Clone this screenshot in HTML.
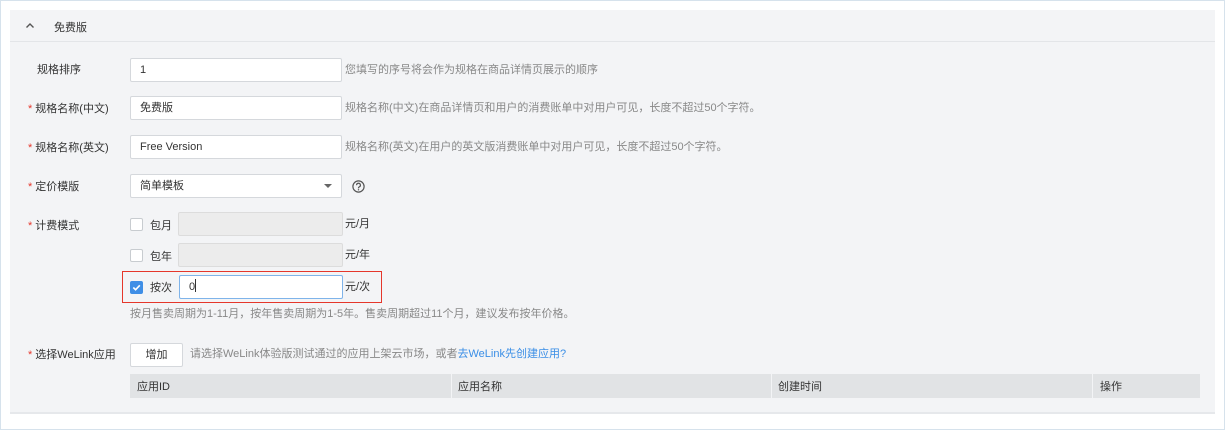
<!DOCTYPE html>
<html><head><meta charset="utf-8"><style>
*{box-sizing:border-box;margin:0;padding:0}
body{width:1225px;height:430px;background:#fff;font-family:"Liberation Sans","Noto Sans CJK SC",sans-serif;font-size:11px;color:#333;position:relative;overflow:hidden}
.frame{position:absolute;left:0;top:0;width:1225px;height:430px;border:1px solid #d6e2ec}
.panel{position:absolute;left:10px;top:10px;width:1205px;height:404px;background:#f3f4f6;border-bottom:2px solid #e6e8eb}
.hdr{position:absolute;left:0;top:0;width:1205px;height:32px;border-bottom:1px solid #e3e5e8}
.a{position:absolute;white-space:nowrap;line-height:14px}
.t{margin-top:1px}
.lbl{color:#333}
.star{color:#e5372b;margin-right:3px}
.inp{position:absolute;background:#fff;border:1px solid #d5d8dc;border-radius:2px;height:24px;padding-left:9px;line-height:23px;color:#333}
.dis{background:#ececec;border-color:#dcdcdc}
.hint{color:#888}
.cb{position:absolute;width:13px;height:13px;border:1px solid #c8ccd0;background:#fff;border-radius:2px}
</style></head><body>
<div class="frame"></div>
<div class="panel">
<div class="hdr">
<svg class="a" style="left:15px;top:12px" width="10" height="7" viewBox="0 0 10 7"><path d="M1.5 5.5L5 2L8.5 5.5" fill="none" stroke="#555" stroke-width="1.4"/></svg>
<div class="a" style="left:44px;top:11px">免费版</div>
</div>
</div>
<div class="a lbl" style="left:37px;top:63px">规格排序</div>
<div class="a lbl" style="left:28px;top:102px"><span class="star">*</span>规格名称(中文)</div>
<div class="a lbl" style="left:28px;top:141px"><span class="star">*</span>规格名称(英文)</div>
<div class="a lbl" style="left:28px;top:180px"><span class="star">*</span>定价模版</div>
<div class="a lbl" style="left:28px;top:219px"><span class="star">*</span>计费模式</div>
<div class="a lbl" style="left:28px;top:348px"><span class="star">*</span>选择WeLink应用</div>

<div class="inp" style="left:130px;top:58px;width:212px">1</div>
<div class="a hint" style="left:345px;top:63px">您填写的序号将会作为规格在商品详情页展示的顺序</div>
<div class="inp" style="left:130px;top:96px;width:212px">免费版</div>
<div class="a hint" style="left:345px;top:101px">规格名称(中文)在商品详情页和用户的消费账单中对用户可见，长度不超过50个字符。</div>
<div class="inp" style="left:130px;top:135px;width:212px">Free Version</div>
<div class="a hint" style="left:345px;top:140px">规格名称(英文)在用户的英文版消费账单中对用户可见，长度不超过50个字符。</div>
<div class="inp" style="left:130px;top:174px;width:212px">简单模板</div>
<svg class="a" style="left:324px;top:184px" width="8" height="5"><path d="M0 0H8L4 4Z" fill="#666"/></svg>
<svg class="a" style="left:352px;top:180px" width="13" height="13" viewBox="0 0 13 13"><circle cx="6.5" cy="6.5" r="5.6" fill="none" stroke="#555" stroke-width="1.2"/><path d="M4.6 5.2a1.9 1.9 0 1 1 2.6 1.7c-.5.2-.7.5-.7 1v.5" fill="none" stroke="#555" stroke-width="1.2"/><circle cx="6.5" cy="9.8" r=".7" fill="#555"/></svg>

<div class="cb" style="left:130px;top:218px"></div>
<div class="a" style="left:150px;top:219px">包月</div>
<div class="inp dis" style="left:178px;top:212px;width:165px"></div>
<div class="a" style="left:345px;top:217px">元/月</div>
<div class="cb" style="left:130px;top:249px"></div>
<div class="a" style="left:150px;top:250px">包年</div>
<div class="inp dis" style="left:178px;top:243px;width:165px"></div>
<div class="a" style="left:345px;top:248px">元/年</div>
<div class="a" style="left:122px;top:271px;width:260px;height:32px;border:1px solid #e5372b"></div>
<div class="cb" style="left:130px;top:281px;background:#3f8ee6;border-color:#3f8ee6"><svg width="11" height="11" style="position:absolute;left:0;top:0"><path d="M2.3 5.5L4.6 7.7L8.8 3.3" fill="none" stroke="#fff" stroke-width="1.6"/></svg></div>
<div class="a" style="left:150px;top:281px">按次</div>
<div class="inp" style="left:179px;top:275px;width:164px;border-color:#7fb4ea">0<span style="display:inline-block;width:1px;height:13px;background:#333;vertical-align:-2px"></span></div>
<div class="a" style="left:345px;top:280px">元/次</div>
<div class="a hint" style="left:130px;top:307px">按月售卖周期为1-11月，按年售卖周期为1-5年。售卖周期超过11个月，建议发布按年价格。</div>

<div class="inp" style="left:130px;top:343px;width:53px;padding:0;text-align:center">增加</div>
<div class="a hint" style="left:190px;top:347px">请选择WeLink体验版测试通过的应用上架云市场，或者<span style="color:#3a8ee6">去WeLink先创建应用?</span></div>
<div class="a" style="left:130px;top:374px;width:1070px;height:24px;background:#e1e3e5"></div>
<div class="a" style="left:451px;top:374px;width:1px;height:24px;background:#f3f4f6"></div>
<div class="a" style="left:771px;top:374px;width:1px;height:24px;background:#f3f4f6"></div>
<div class="a" style="left:1092px;top:374px;width:1px;height:24px;background:#f3f4f6"></div>
<div class="a" style="left:137px;top:380px">应用ID</div>
<div class="a" style="left:458px;top:380px">应用名称</div>
<div class="a" style="left:778px;top:380px">创建时间</div>
<div class="a" style="left:1100px;top:380px">操作</div>
</body></html>
